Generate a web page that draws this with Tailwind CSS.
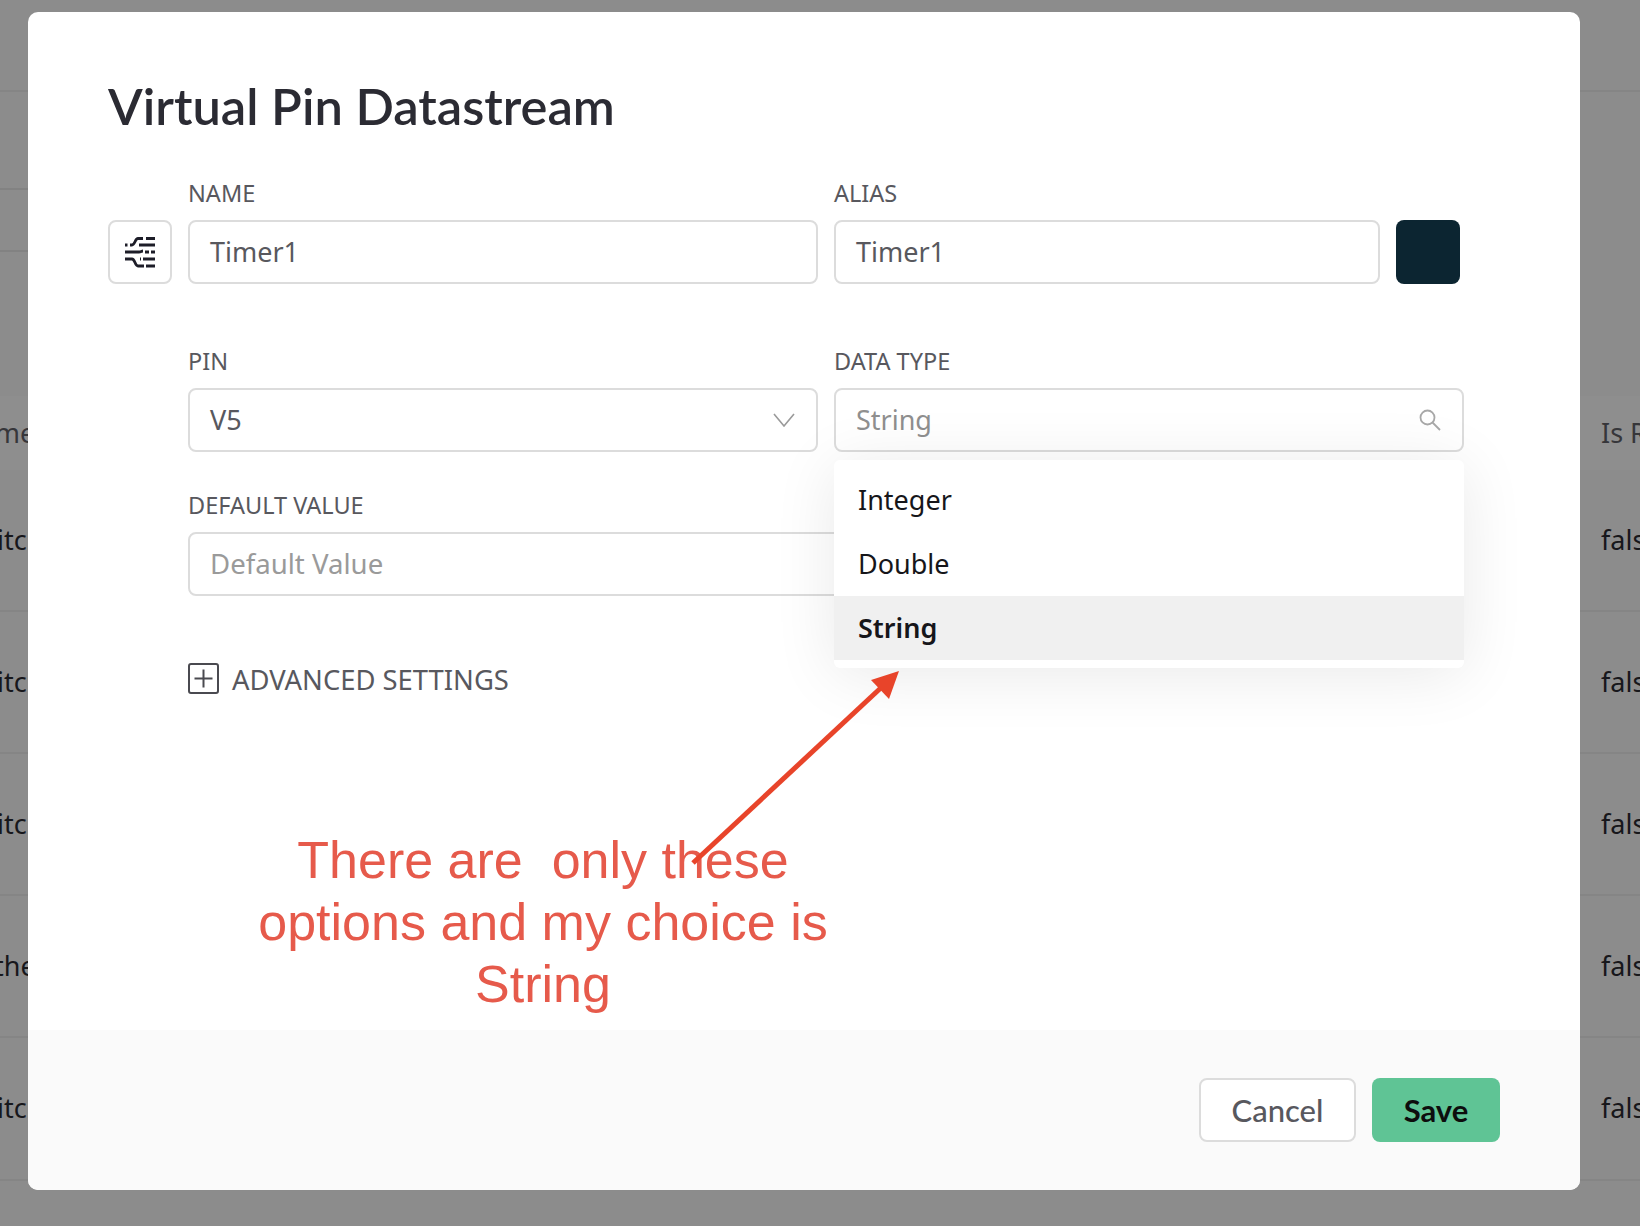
<!DOCTYPE html>
<html lang="en">
<head>
  <meta charset="UTF-8" />
  <title>Virtual Pin Datastream</title>
  <script src="https://cdn.jsdelivr.net/npm/@tailwindcss/browser@4"></script>
</head>
<body class="relative w-[1640px] h-[1226px] overflow-hidden bg-[#8c8c8c] font-['Noto_Sans',sans-serif] text-[27px] text-[#17171b]">

  <!-- table behind the modal -->
  <div class="flex flex-col">
    <div class="h-[92px] border-b-2 border-[#858585]"></div>
    <div class="h-[304px] w-[28px]">
      <div class="h-[98px] border-b-2 border-[#828282]"></div>
      <div class="h-[62px] border-b-2 border-[#828282]"></div>
    </div>
    <div class="h-[74px] flex justify-between items-center bg-[#8e8e8e] text-[#36363a]">
      <div class="w-[28px] overflow-hidden whitespace-nowrap"><span class="block ml-[-41px]">Name</span></div>
      <div class="w-[39px] overflow-hidden whitespace-nowrap">Is Rec</div>
    </div>
    <div class="h-[142px] flex justify-between items-center border-b-2 border-[#858585]">
      <div class="w-[28px] overflow-hidden whitespace-nowrap"><span class="block ml-[-39px]">Switch</span></div>
      <div class="w-[39px] overflow-hidden">false</div>
    </div>
    <div class="h-[142px] flex justify-between items-center border-b-2 border-[#858585]">
      <div class="w-[28px] overflow-hidden whitespace-nowrap"><span class="block ml-[-39px]">Switch</span></div>
      <div class="w-[39px] overflow-hidden">false</div>
    </div>
    <div class="h-[142px] flex justify-between items-center border-b-2 border-[#858585]">
      <div class="w-[28px] overflow-hidden whitespace-nowrap"><span class="block ml-[-39px]">Switch</span></div>
      <div class="w-[39px] overflow-hidden">false</div>
    </div>
    <div class="h-[142px] flex justify-between items-center border-b-2 border-[#858585]">
      <div class="w-[28px] overflow-hidden whitespace-nowrap"><span class="block ml-[-27px]">Other</span></div>
      <div class="w-[39px] overflow-hidden">false</div>
    </div>
    <div class="h-[143px] flex justify-between items-center border-b-2 border-[#858585]">
      <div class="w-[28px] overflow-hidden whitespace-nowrap"><span class="block ml-[-39px]">Switch</span></div>
      <div class="w-[39px] overflow-hidden">false</div>
    </div>
  </div>

  <!-- modal -->
  <div class="absolute left-[28px] top-[12px] w-[1552px] h-[1178px] bg-white rounded-[10px] overflow-hidden flex flex-col">
    <div class="relative flex-1 pl-[80px]">
      <h1 class="mt-[62px] h-[64px] leading-[64px] text-[50.6px] font-semibold text-[#2b2b33] font-['Lato',sans-serif]">Virtual Pin Datastream</h1>

      <div class="mt-[42px] flex gap-4 items-end">
        <button class="w-[64px] h-[64px] border-2 border-[#dcdcdc] rounded-[8px] flex items-center justify-center">
          <svg width="30" height="31" viewBox="0 0 30 31" fill="none" stroke="#1d1d28" stroke-width="2.8">
            <path d="M0 8h2.5M5 8h2c3 0 3-6.5 6-6.5h5M21 1.5h9M14 8h16M0 15h14c2 0 2.5-1 4-1M20 15h4M26 15h4M0 22h7c3 0 3 7 6 7h6M21 29h9M15 22h1M18 22h12" />
          </svg>
        </button>
        <div class="w-[630px]">
          <div class="h-[26px] mb-[14px] leading-[26px] text-[23.5px] text-[#58585e]">NAME</div>
          <div class="h-[64px] px-5 flex items-center border-2 border-[#dcdcdc] rounded-[8px] text-[#58585e]">Timer1</div>
        </div>
        <div class="w-[546px]">
          <div class="h-[26px] mb-[14px] leading-[26px] text-[23.5px] text-[#58585e]">ALIAS</div>
          <div class="h-[64px] px-5 flex items-center border-2 border-[#dcdcdc] rounded-[8px] text-[#58585e]">Timer1</div>
        </div>
        <div class="w-[64px] h-[64px] rounded-[8px] bg-[#0c2531]"></div>
      </div>

      <div class="mt-[64px] ml-[80px] flex gap-4">
        <div class="w-[630px]">
          <div class="h-[26px] mb-[14px] leading-[26px] text-[23.5px] text-[#58585e]">PIN</div>
          <div class="h-[64px] pl-5 pr-[21px] flex items-center justify-between border-2 border-[#dcdcdc] rounded-[8px] text-[#58585e]">
            V5
            <svg width="22" height="14" viewBox="0 0 22 14" fill="none" stroke="#9a9a9a" stroke-width="1.6"><path d="M1 1l10 12L21 1" /></svg>
          </div>
        </div>
        <div class="relative w-[630px]">
          <div class="h-[26px] mb-[14px] leading-[26px] text-[23.5px] text-[#58585e]">DATA TYPE</div>
          <div class="h-[64px] pl-5 pr-[21px] flex items-center justify-between border-2 border-[#dcdcdc] rounded-[8px] text-[#8f8f8f]">
            String
            <svg width="22" height="22" viewBox="0 0 22 22" fill="none" stroke="#a8a8a8" stroke-width="1.8"><circle cx="8.5" cy="8.5" r="7" /><path d="M13.5 13.5l7.5 7.5" /></svg>
          </div>
          <!-- open dropdown -->
          <div class="absolute z-10 left-0 top-[112px] w-[630px] h-[208px] py-2 bg-white rounded-[6px] shadow-[0_6px_64px_rgba(0,0,0,0.09)] text-[#16161a]">
            <div class="h-[64px] px-6 flex items-center">Integer</div>
            <div class="h-[64px] px-6 flex items-center">Double</div>
            <div class="h-[64px] px-6 flex items-center bg-[#f0f0f0] font-semibold">String</div>
          </div>
        </div>
      </div>

      <div class="mt-[40px] ml-[80px] w-[1276px]">
        <div class="h-[26px] mb-[14px] leading-[26px] text-[23.5px] text-[#58585e]">DEFAULT VALUE</div>
        <div class="h-[64px] px-5 flex items-center border-2 border-[#dcdcdc] rounded-[8px] text-[27.6px] text-[#9a9a9a]">Default Value</div>
      </div>

      <div class="mt-[63px] ml-[80px] flex items-center gap-[13px] text-[27.4px] text-[#58585e]">
        <svg class="mt-[-2px]" width="31" height="31" viewBox="0 0 31 31" fill="none" stroke="#4a4a50" stroke-width="2"><rect x="1" y="1" width="29" height="29" rx="2" /><path d="M15.5 6.5v18M6.5 15.5h18" /></svg>
        ADVANCED SETTINGS
      </div>

      <!-- annotation drawn on top of the screenshot -->
      <div class="absolute z-20 left-[215px] top-[817px] w-[600px] text-center whitespace-pre font-['Liberation_Sans',sans-serif] text-[52px] leading-[62px] text-[#e65a4b]">There are  only these
options and my choice is
String</div>
      <svg class="absolute left-0 top-0 z-20" width="1000" height="880" viewBox="0 0 1000 880" fill="none">
        <path d="M665 851L857 672" stroke="#e8442a" stroke-width="5" />
        <path d="M871 659L843 668L861 687Z" fill="#e8442a" />
      </svg>
    </div>

    <div class="h-[160px] bg-[#fafafa] flex items-center justify-end gap-4 pr-[80px] font-['Lato',sans-serif] text-[31px]">
      <button class="w-[157px] h-[64px] bg-white border-2 border-[#dcdcdc] rounded-[8px] text-[#58585e] font-medium">Cancel</button>
      <button class="w-[128px] h-[64px] bg-[#5fc495] rounded-[8px] text-[#0d0d0d] font-bold">Save</button>
    </div>
  </div>
</body>
</html>
